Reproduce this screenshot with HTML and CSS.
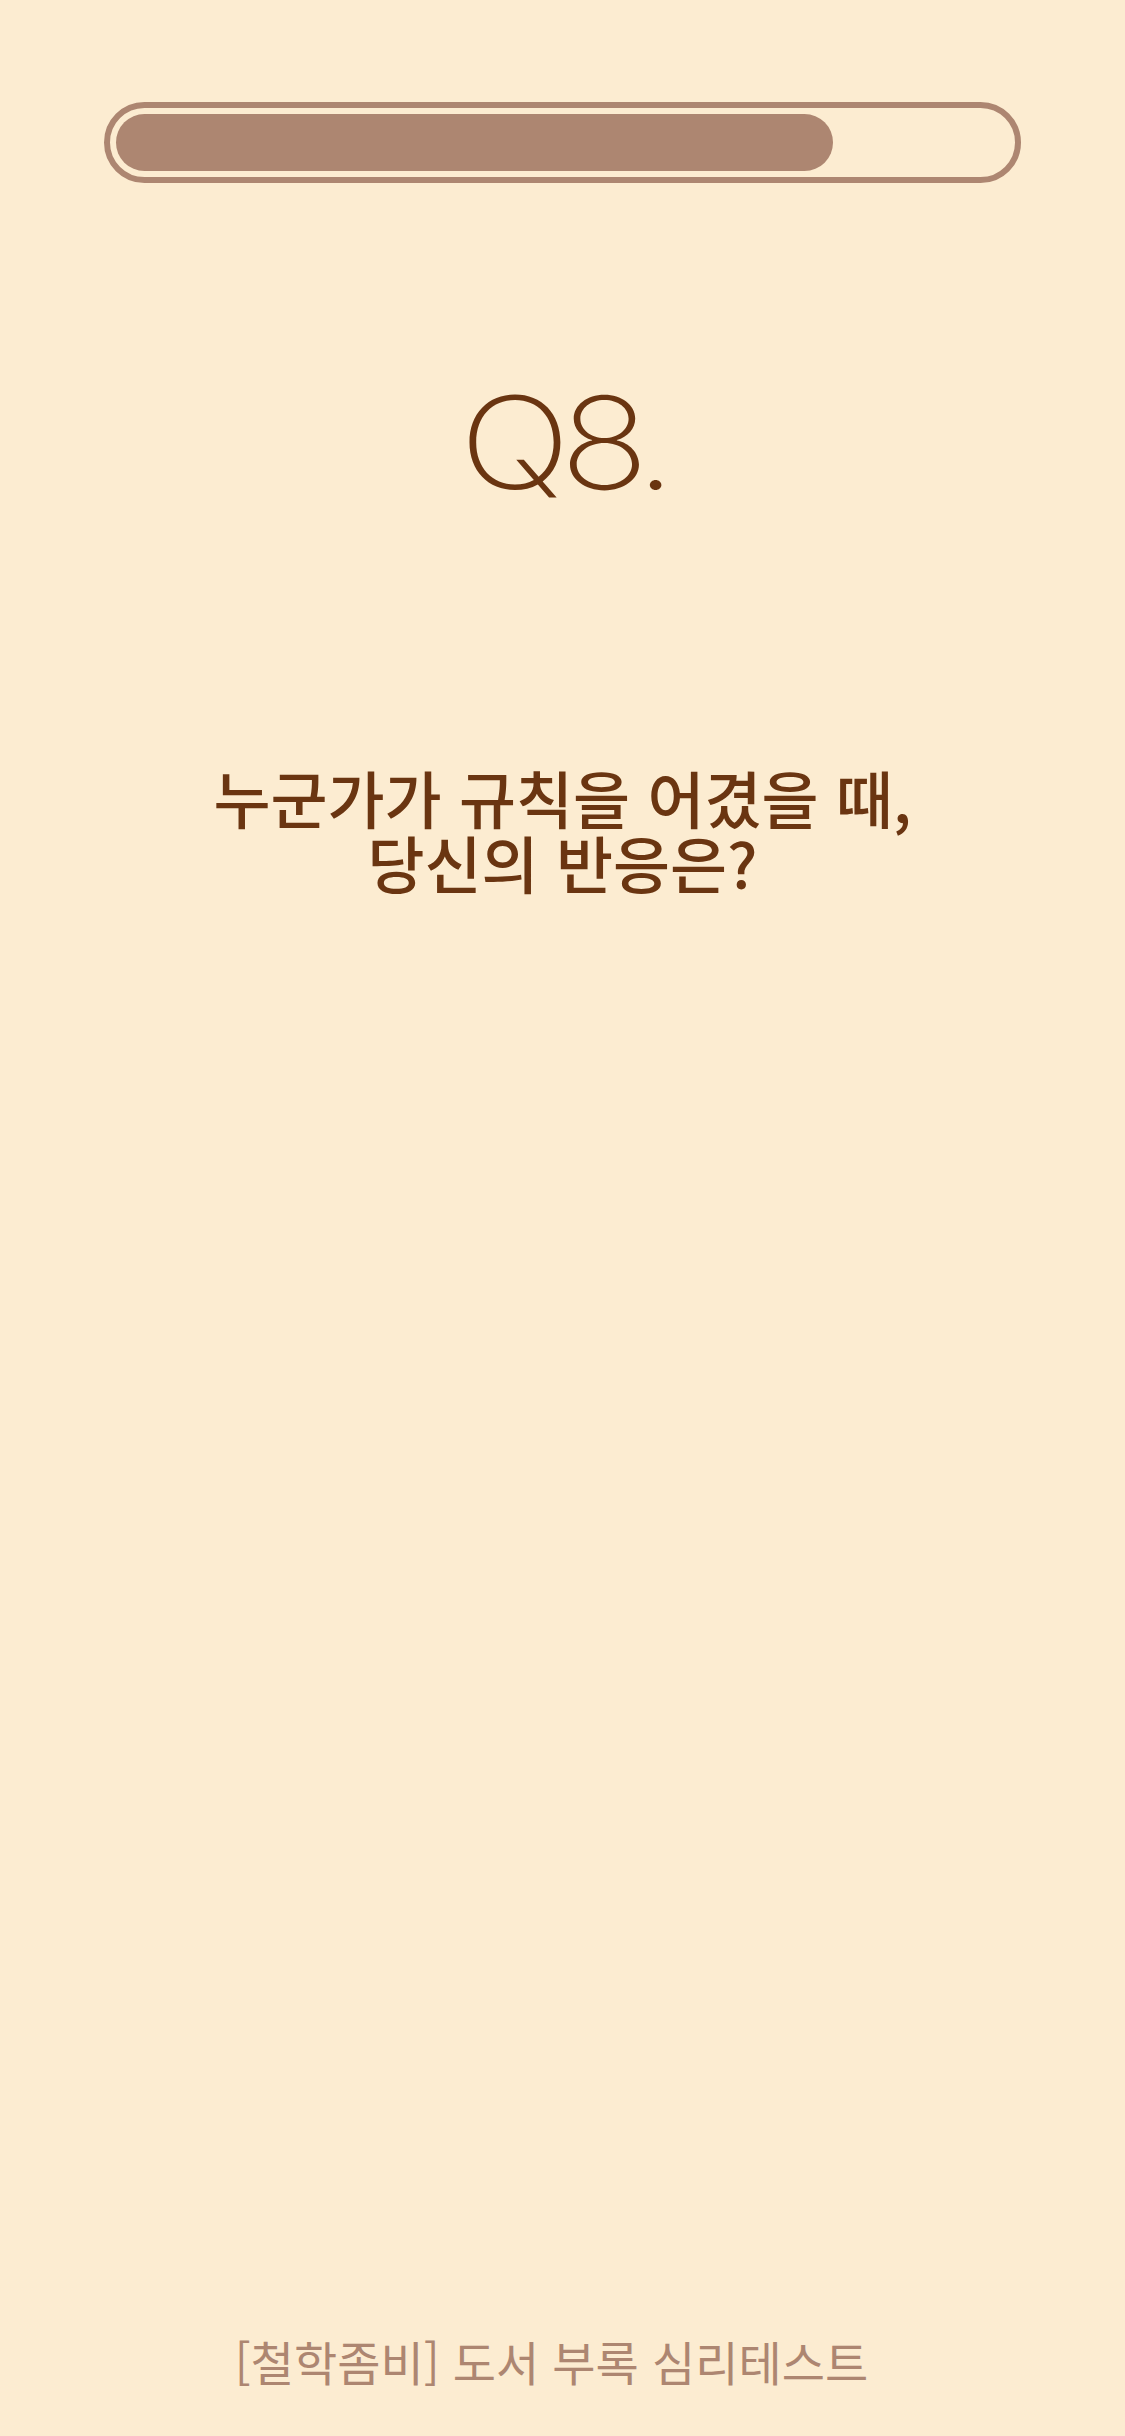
FILE: index.html
```html
<!DOCTYPE html>
<html lang="ko">
<head>
<meta charset="utf-8">
<title>심리테스트 Q8</title>
<link rel="stylesheet" href="styles.css">
</head>
<body>
<main class="screen">
  <div class="progress">
    <div class="progress-fill" style="width: 80.3%"></div>
  </div>
  <h1 class="q-num">Q8.</h1>
  <p class="question">누군가가 규칙을 어겼을 때,<br>당신의 반응은?</p>
  <footer class="footer">[철학좀비] 도서 부록 심리테스트</footer>
</main>
</body>
</html>
```
FILE: styles.css
```css
html, body {
  margin: 0;
  padding: 0;
  background: #fcecd1;
}
.screen {
  width: 1125px;
  height: 2436px;
  box-sizing: border-box;
  display: flex;
  flex-direction: column;
  align-items: center;
  padding-top: 102px;
  padding-bottom: 52px;
}
.progress {
  width: 917px;
  height: 81px;
  box-sizing: border-box;
  border: 6px solid #ad8671;
  border-radius: 41px;
  padding: 6px;
}
.progress-fill {
  height: 100%;
  background: #ad8671;
  border-radius: 29px;
}
.q-num {
  margin: 196px 0 0;
  font-family: Inter, "Noto Sans", sans-serif;
  font-weight: 200;
  font-size: 128px;
  line-height: 1;
  color: #6a3511;
  letter-spacing: -9px;
  transform: scaleX(1.15);
}
.question {
  margin: 258px 0 0;
  font-family: "Noto Sans CJK KR", sans-serif;
  font-weight: 500;
  font-size: 62px;
  line-height: 65px;
  letter-spacing: 0;
  text-align: center;
  color: #6a3511;
}
.footer {
  margin-top: auto;
  padding-right: 22px;
  font-family: "Noto Sans CJK KR", sans-serif;
  font-weight: 400;
  font-size: 47px;
  line-height: 1;
  letter-spacing: 0;
  color: #ad8671;
}
```
